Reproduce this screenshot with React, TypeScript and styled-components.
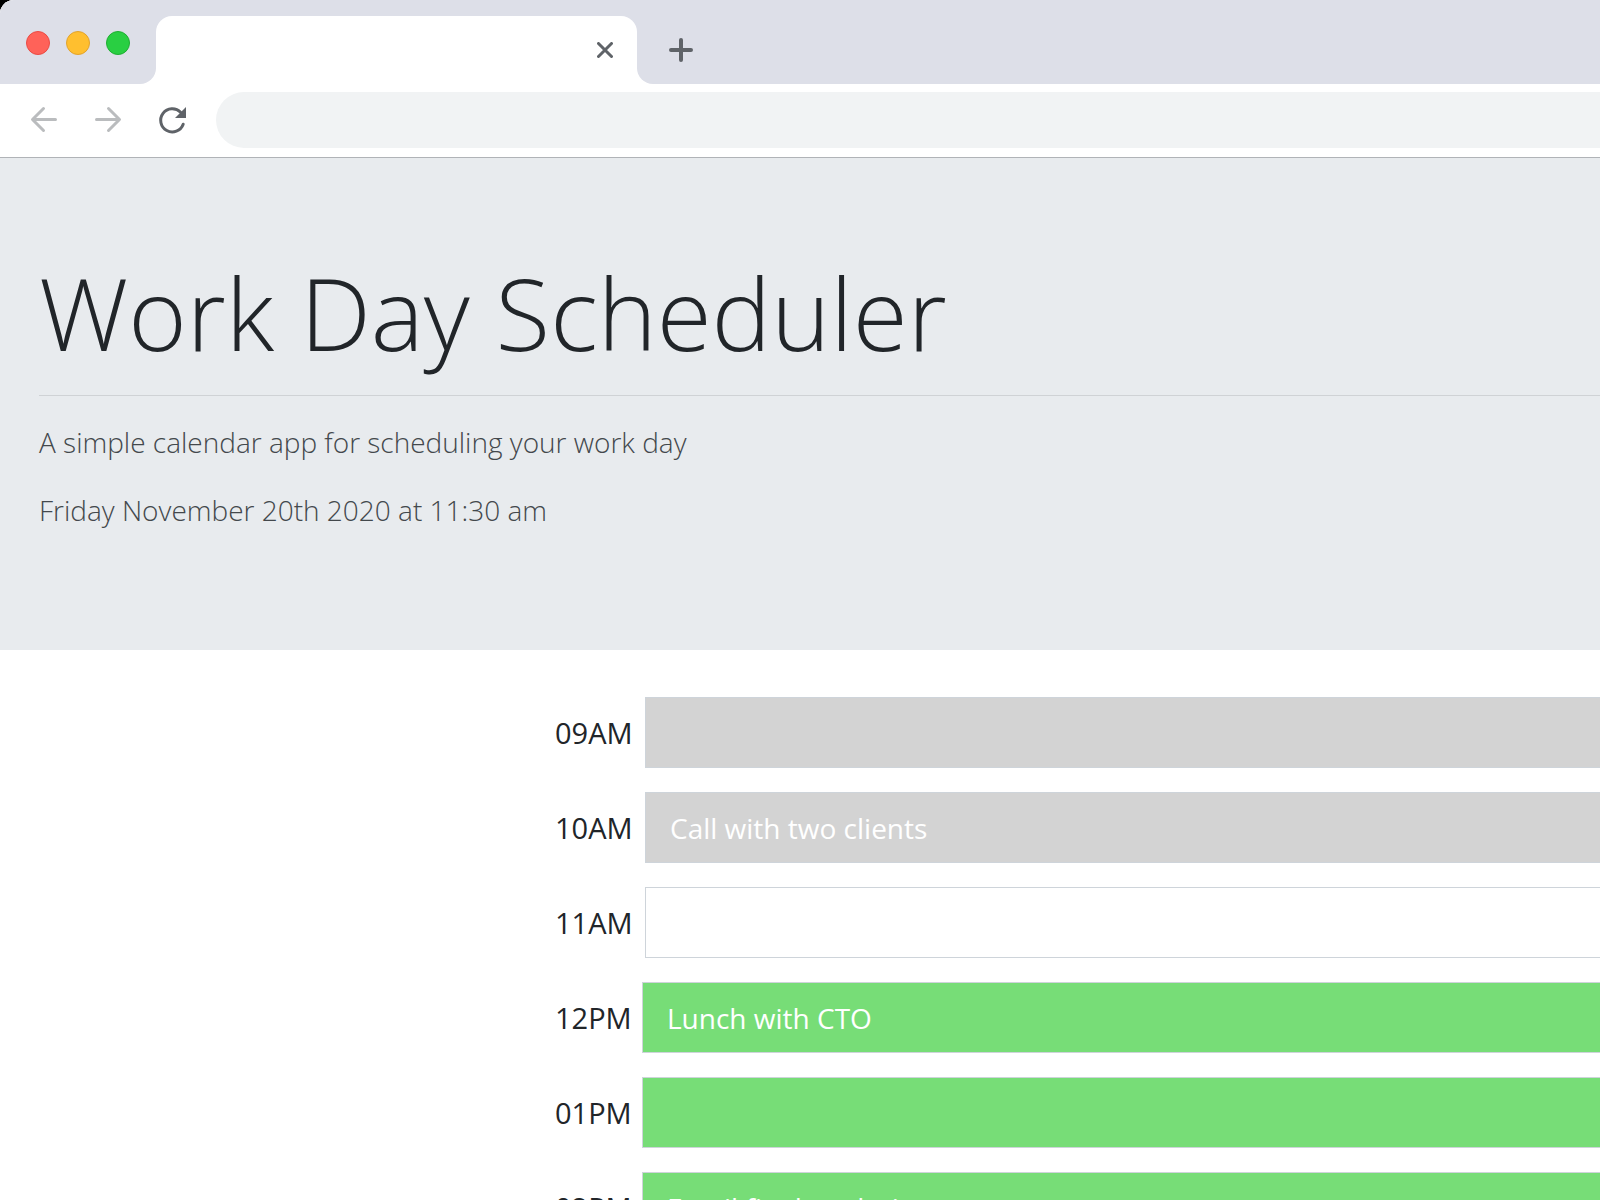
import React from "react";
import styled, { createGlobalStyle } from "styled-components";

const GlobalStyle = createGlobalStyle`
  *, *::before, *::after { box-sizing: border-box; }
  body {
    margin: 0;
    background: #000;
    color: #212529;
    font-family: "Segoe UI", "Open Sans", "Noto Sans", sans-serif;
  }
  h1, p { margin: 0; }
  button { padding: 0; border: 0; background: none; display: flex; }
`;

const BrowserWindow = styled.div`
  display: flex;
  flex-direction: column;
  height: 100vh;
  overflow: hidden;
  background: #fff;
  border-top-left-radius: 14px;
`;

const TabStrip = styled.div`
  display: flex;
  flex: none;
  height: 84px;
  background: #fff;
`;

const WindowControls = styled.div`
  display: flex;
  gap: 16px;
  width: 156px;
  padding: 31px 0 0 26px;
  background: #dddfe8;
  border-bottom-right-radius: 16px;
`;

const WindowButton = styled.button<{ $fill: string; $edge: string }>`
  width: 24px;
  height: 24px;
  border: 1px solid ${(p) => p.$edge};
  border-radius: 50%;
  background: ${(p) => p.$fill};
`;

const TabSlot = styled.div`
  width: 481px;
  padding-top: 16px;
  background: #dddfe8;
`;

const Tab = styled.div`
  display: flex;
  align-items: center;
  justify-content: flex-end;
  height: 68px;
  padding-right: 24px;
  background: #fff;
  border-radius: 16px 16px 0 0;
`;

const StripRest = styled.div`
  display: flex;
  flex: 1;
  align-items: center;
  padding: 16px 0 0 32px;
  background: #dddfe8;
  border-bottom-left-radius: 16px;
`;

const Toolbar = styled.div`
  display: flex;
  flex: none;
  align-items: center;
  gap: 32px;
  height: 74px;
  padding: 8px 0 9px 28px;
  background: #fff;
  border-bottom: 1px solid #b0b3b7;
`;

const Address = styled.input`
  flex: 1;
  height: 56px;
  margin-left: -4px;
  padding: 0 28px;
  border: 0;
  outline: 0;
  border-radius: 28px 0 0 28px;
  background: #f1f3f4;
  font: inherit;
`;

const Header = styled.header`
  flex: none;
  padding: 90px 0 118px 39px;
  background: #e8ebee;
`;

const Title = styled.h1`
  padding-bottom: 19px;
  border-bottom: 1px solid #cfd2d5;
  font-size: 100px;
  font-weight: 300;
  line-height: 128px;
`;

const Lead = styled.p`
  margin-top: 24px;
  color: #43484c;
  font-size: 28px;
  font-weight: 300;
  line-height: 44px;
`;

const Schedule = styled.main`
  display: flex;
  flex-direction: column;
  gap: 24px;
  padding: 47px 0 24px 555px;
`;

const Row = styled.div`
  display: flex;
  flex: none;
`;

const Hour = styled.label<{ $afternoon: boolean }>`
  width: ${(p) => (p.$afternoon ? 87 : 90)}px;
  padding-top: 16px;
  font-size: 29px;
  line-height: 40px;
`;

const slotColours = {
  past: "#d3d3d3",
  present: "#ffffff",
  future: "#77dd77",
};

const Slot = styled.input<{ $state: keyof typeof slotColours }>`
  flex: 1;
  min-width: 0;
  height: 71px;
  padding: 1px 24px 0;
  border: 1px solid #ced4da;
  border-right: 0;
  border-radius: 0;
  outline: 0;
  background: ${(p) => slotColours[p.$state]};
  color: #fff;
  font-family: inherit;
  font-size: 28px;
`;

const hours: { hour: string; text: string; state: keyof typeof slotColours }[] = [
  { hour: "09AM", text: "", state: "past" },
  { hour: "10AM", text: "Call with two clients", state: "past" },
  { hour: "11AM", text: "", state: "present" },
  { hour: "12PM", text: "Lunch with CTO", state: "future" },
  { hour: "01PM", text: "", state: "future" },
  { hour: "02PM", text: "Email final analysis", state: "future" },
];

export default function App() {
  return (
    <BrowserWindow>
      <GlobalStyle />
      <TabStrip>
        <WindowControls>
          <WindowButton aria-label="Close window" $fill="#ff6259" $edge="#ea4b44" />
          <WindowButton aria-label="Minimize window" $fill="#ffbf2f" $edge="#e2a32c" />
          <WindowButton aria-label="Zoom window" $fill="#29cf42" $edge="#1fae32" />
        </WindowControls>
        <TabSlot>
          <Tab>
            <button aria-label="Close tab">
              <svg width="16" height="16" viewBox="0 0 16 16" fill="none" stroke="#5f6368" strokeWidth="3" strokeLinecap="round">
                <path d="M1.5 1.5 14.5 14.5M14.5 1.5 1.5 14.5" />
              </svg>
            </button>
          </Tab>
        </TabSlot>
        <StripRest>
          <button aria-label="New tab">
            <svg width="24" height="24" viewBox="0 0 24 24" fill="none" stroke="#5f6368" strokeWidth="4" strokeLinecap="round">
              <path d="M12 2V22M2 12H22" />
            </svg>
          </button>
        </StripRest>
      </TabStrip>
      <Toolbar>
        <button aria-label="Back">
          <svg width="32" height="32" viewBox="0 0 32 32" fill="none" stroke="#babcbe" strokeWidth="3" strokeLinecap="round" strokeLinejoin="round">
            <path d="M27.5 15.5H5M15.5 4.5 4.5 15.5 15.5 26.5" />
          </svg>
        </button>
        <button aria-label="Forward">
          <svg width="32" height="32" viewBox="0 0 32 32" fill="none" stroke="#babcbe" strokeWidth="3" strokeLinecap="round" strokeLinejoin="round">
            <path d="M4.5 15.5H27M16.5 4.5 27.5 15.5 16.5 26.5" />
          </svg>
        </button>
        <button aria-label="Reload">
          <svg width="32" height="32" viewBox="0 0 32 32" fill="none">
            <path d="M27.2 20.2A11.6 11.6 0 1 1 24.6 8.2" stroke="#5f6368" strokeWidth="3" strokeLinecap="round" />
            <path d="M30 3V14H19Z" fill="#5f6368" />
          </svg>
        </button>
        <Address aria-label="Address" />
      </Toolbar>
      <Header>
        <Title>Work Day Scheduler</Title>
        <Lead>A simple calendar app for scheduling your work day</Lead>
        <Lead>Friday November 20th 2020 at 11:30 am</Lead>
      </Header>
      <Schedule>
        {hours.map(({ hour, text, state }) => (
          <Row key={hour}>
            <Hour htmlFor={"slot-" + hour} $afternoon={hour.endsWith("PM")}>
              {hour}
            </Hour>
            <Slot id={"slot-" + hour} defaultValue={text} $state={state} />
          </Row>
        ))}
      </Schedule>
    </BrowserWindow>
  );
}
